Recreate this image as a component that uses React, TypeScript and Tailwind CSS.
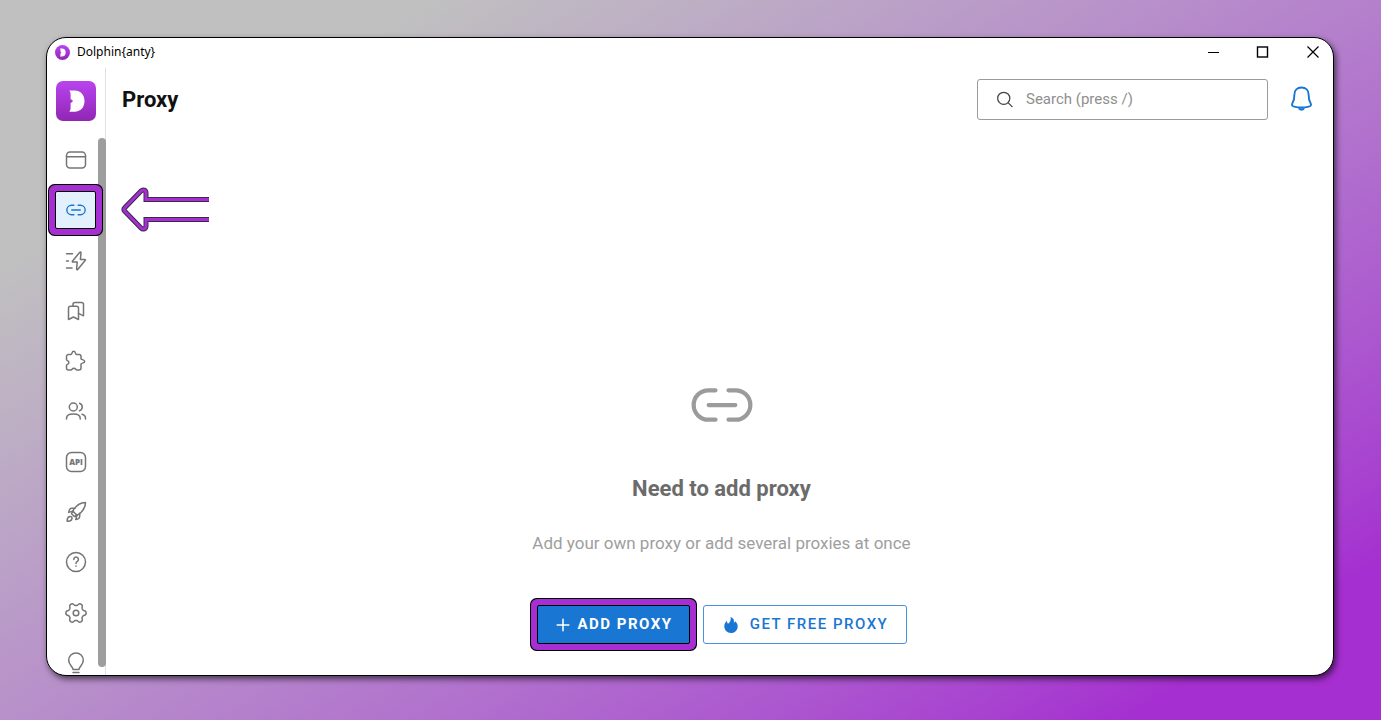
import type { ReactNode } from 'react';

type IconProps = { className?: string; children?: ReactNode };

function Icon({ className = 'size-6', children }: IconProps) {
  return (
    <svg
      className={className}
      viewBox="0 0 24 24"
      fill="none"
      stroke="currentColor"
      strokeWidth="1.5"
      strokeLinecap="round"
      strokeLinejoin="round"
      aria-hidden="true"
    >
      {children}
    </svg>
  );
}

function LinkIcon({ className }: IconProps) {
  return (
    <Icon className={className}>
      <path d="M9.7 6.800H7.200a5.200 5.200 0 0 0 0 10.400h2.500M14.300 6.800h2.500a5.200 5.200 0 0 1 0 10.400h-2.500M7.300 12h9.400" />
    </Icon>
  );
}

function LogoMark({ className, round }: { className: string; round?: boolean }) {
  return (
    <svg className={className} viewBox="0 0 40 40" aria-hidden="true">
      <defs>
        <linearGradient id={round ? 'logo-round' : 'logo-square'} x1="0" y1="0" x2="0" y2="1">
          <stop offset="0" stopColor="#b944f0" />
          <stop offset="1" stopColor="#9126b4" />
        </linearGradient>
      </defs>
      <rect width="40" height="40" rx={round ? 20 : 7} fill={round ? 'url(#logo-round)' : 'url(#logo-square)'} />
      <path
        d="M13.3 9.5h5.4c6 0 9.8 4.2 9.8 10.6s-3.8 10.6-9.8 10.6h-5.4c.9-1.3 1.3-2.4 1.3-3.9v-4.9c1.2-.3 2-.9 2.3-1.8-.3-.9-1.1-1.5-2.3-1.8v-4.9c0-1.5-.4-2.6-1.3-3.9Z"
        fill="#fff"
      />
    </svg>
  );
}

// six soft teeth around the hub
const gearPoints = Array.from({ length: 120 }, (_, i) => {
  const angle = (i * Math.PI) / 60;
  const wave = Math.cos(6 * angle);
  const radius = 8.8 + 1.4 * Math.tanh(1.6 * wave);
  return `${(12 + radius * Math.cos(angle)).toFixed(2)},${(12 + radius * Math.sin(angle)).toFixed(2)}`;
}).join(' ');

const items = [
  {
    label: 'Browsers',
    icon: (
      <Icon>
        <rect x="2.5" y="4" width="19" height="16" rx="3.5" />
        <path d="M2.5 8.7h19" />
      </Icon>
    ),
  },
  { label: 'Proxy', active: true, icon: <LinkIcon className="size-[22px]" /> },
  {
    label: 'Automation',
    icon: (
      <Icon>
        <path d="M2.5 4.7h6M2.5 12h2M2.5 19H8" />
        <path d="M15.8 3.2 8.4 12.2c-.3.4 0 .9.5.9h4.3l-.6 7c0 .7.7.9 1.1.4l7.6-9.2c.3-.4.1-.9-.4-.9h-4.5l.6-6.8c0-.7-.8-.9-1.2-.4Z" />
      </Icon>
    ),
  },
  {
    label: 'Bookmarks',
    icon: (
      <Icon>
        <path d="M4.5 9.2a2 2 0 0 1 2-2h6a2 2 0 0 1 2 2v11.3L9.5 18l-5 2.5Z" />
        <path d="M9 7.2V5.5a2 2 0 0 1 2-2h6.5a2 2 0 0 1 2 2v11.3l-5-2.5" />
      </Icon>
    ),
  },
  {
    label: 'Extensions',
    icon: (
      <Icon>
        <path d="M2.500 7.500a2 2 0 0 1 2-2H7c1.200 0 .6-3.200 2.700-3.200s1.500 3.200 2.700 3.200H15a2 2 0 0 1 2 2v2.200c0 1.200 3.700.7 3.700 2.700S17 13.900 17 15.100v3.900a2 2 0 0 1-2 2h-2.200c-1.200 0-.9-1.800-2.900-1.800S8.200 21 7 21H4.500a2 2 0 0 1-2-2v-2.600c0-1.200 2.400-.9 2.400-2.900s-2.400-1.700-2.400-2.900Z" />
      </Icon>
    ),
  },
  {
    label: 'Users',
    icon: (
      <Icon>
        <circle cx="9.3" cy="8" r="4" />
        <path d="M15.5 4.2a4 4 0 0 1 0 7.6M2.5 20v-.8c0-2.7 2.3-4.2 6.8-4.2s6.9 1.500 6.900 4.200v.8M18 15.300c2.300.6 3.500 1.900 3.500 3.900v.8" />
      </Icon>
    ),
  },
  {
    label: 'API',
    icon: (
      <Icon>
        <rect x="2.5" y="2.5" width="19" height="19" rx="5" />
        <text
          x="12"
          y="14.500"
          textAnchor="middle"
          fill="currentColor"
          stroke="none"
          className="font-['Open_Sans',sans-serif] text-[8px] font-extrabold"
        >
          API
        </text>
      </Icon>
    ),
  },
  {
    label: 'Quick start',
    icon: (
      <Icon>
        <path d="M21.5 2.5c-5 0-9.6 3-12.7 8.6l4.2 4.2c5.5-3.2 8.5-7.8 8.5-12.8Z" />
        <path d="M10.8 8.3H7.7c-1.3 0-2.6 1.8-3 4.1l4.1-1.3M15.7 13.2v3.1c0 1.3-1.7 2.9-4 3.3l1.3-4.3M8.8 11.1l-1.3 2.7 2.7 2.7 2.8-1.2M5.8 16.5c-1.8.4-2.8 2.3-2.6 4.8 2.5.2 4.4-.8 4.8-2.6.3-1.4-.8-2.5-2.2-2.2Z" />
      </Icon>
    ),
  },
  {
    label: 'Help',
    icon: (
      <Icon>
        <circle cx="12" cy="12" r="9.5" />
        <path d="M9.8 9.4a2.3 2.3 0 1 1 3.5 2c-.9.6-1.3 1-1.3 2M12 16.1v.2" />
      </Icon>
    ),
  },
  {
    label: 'Settings',
    icon: (
      <Icon>
        <circle cx="12" cy="12" r="2.8" />
        <polygon points={gearPoints} />
      </Icon>
    ),
  },
  {
    label: 'Ideas',
    icon: (
      <Icon>
        <path d="M9 18.5c0-3-4.3-4.6-4.3-9.3a7.3 7.3 0 0 1 14.6 0c0 4.7-4.3 6.3-4.3 9.3ZM9 21.5h6" />
      </Icon>
    ),
  },
];

function Sidebar() {
  return (
    <aside className="relative flex w-[59px] shrink-0 flex-col items-center border-r border-[#e0e0e0] pt-[13px] pr-px">
      <LogoMark className="size-10 shrink-0" />
      {/* the list runs a little past the window's bottom edge */}
      <nav className="mt-5 -mb-[7px] flex flex-1 flex-col justify-between">
        {items.map(({ label, icon, active }) => (
          <button
            key={label}
            type="button"
            aria-label={label}
            className={
              active
                ? 'relative z-10 flex h-[38px] w-[41px] shrink-0 items-center justify-center rounded-xs border border-black bg-[#e3f1fd] text-[#1976d2] shadow-[0_0_0_6px_#a52fd0,0_0_0_7px_#000]'
                : 'flex h-[38px] w-[41px] shrink-0 items-center justify-center text-[#757575]'
            }
          >
            {icon}
          </button>
        ))}
      </nav>
      <div className="absolute top-[70px] -right-px bottom-2 w-2 rounded-full bg-[#9e9e9e]" />
    </aside>
  );
}

function TitleBar() {
  return (
    <div className="flex h-[30px] shrink-0 items-center pr-3 pb-0.5 pl-2 text-black">
      <LogoMark className="mr-[7px] size-[15px]" round />
      <span className="flex-1 font-['Noto_Sans',sans-serif] text-xs">Dolphin&#123;anty&#125;</span>
      <div className="flex gap-[34px]">
        <button type="button" aria-label="Minimize">
          <svg className="size-4" viewBox="0 0 16 16" stroke="currentColor" fill="none">
            <path d="M3 8.5h11" strokeWidth="1.2" />
          </svg>
        </button>
        <button type="button" aria-label="Maximize">
          <svg className="size-4" viewBox="0 0 16 16" stroke="currentColor" fill="none">
            <rect x="2.5" y="3" width="10" height="10" strokeWidth="1.4" />
          </svg>
        </button>
        <button type="button" aria-label="Close">
          <svg className="size-4" viewBox="0 0 16 16" stroke="currentColor" fill="none">
            <path d="m2.5 2.500 11 11M13.500 2.500l-11 11" strokeWidth="1.2" />
          </svg>
        </button>
      </div>
    </div>
  );
}

function Header() {
  return (
    <header className="flex items-center pt-[11px] pr-[18px] pl-4">
      <h1 className="flex-1 text-[22px] leading-7 font-bold text-[#111]">Proxy</h1>
      <label className="flex h-[41px] w-[291px] items-center rounded-[3px] border border-[#9b9b9b] pl-[17px]">
        <Icon className="size-5 text-[#424242]">
          <circle cx="10.5" cy="10" r="7.3" />
          <path d="m16 15.500 4.500 4.500" />
        </Icon>
        <input
          type="search"
          aria-label="Search"
          placeholder="Search (press /)"
          className="ml-[11px] min-w-0 flex-1 bg-transparent text-[15px] outline-none placeholder:text-[#8f8f8f]"
        />
      </label>
      <button type="button" aria-label="Notifications" className="ml-5 pb-0.5 text-[#1976d2]">
        <Icon className="size-[27px]">
          <path
            strokeWidth="1.7"
            d="M12 2.2c-3.8 0-6.3 2.7-6.3 6.3 0 3.7-.3 5.3-1.7 7.5-1 1.7-.4 2.7 1.5 3.2 4 1 9 1 13 0 1.9-.5 2.5-1.5 1.5-3.2-1.4-2.2-1.7-3.8-1.7-7.5 0-3.6-2.5-6.3-6.3-6.3ZM9.5 20.2c.4 1.300 1.300 1.800 2.500 1.800s2.100-.5 2.500-1.800"
          />
        </Icon>
      </button>
    </header>
  );
}

const arrowPath = 'M88 13.5H25V7c0-3-3-4-5-2L4 21.5c-1.5 1.5-1.5 2.5 0 4L20 42c2 2 5 1 5-2v-6.5h63';

function PointerArrow() {
  return (
    <svg className="absolute top-[118px] left-[15px] h-[46px] w-[92px]" viewBox="0 0 92 46" fill="none" aria-hidden="true">
      <path d={arrowPath} stroke="#3a2a48" strokeWidth="5" />
      <path d={arrowPath} stroke="#a52fd0" strokeWidth="3" />
    </svg>
  );
}

function EmptyState() {
  return (
    <section className="flex flex-1 flex-col items-center justify-end pb-[31px] pl-1">
      <LinkIcon className="size-[68px] text-[#9b9b9b]" />
      <h2 className="mt-9 text-[22px] leading-7 font-bold text-[#6b6b6b]">Need to add proxy</h2>
      <p className="mt-[26px] text-[17px] leading-7 text-[#9e9e9e]">Add your own proxy or add several proxies at once</p>
      <div className="mt-12 flex gap-[13px]">
        <button
          type="button"
          className="flex h-[39px] w-[153px] items-center justify-center rounded-xs border border-black bg-[#1976d2] pl-[3px] text-[15px] font-bold tracking-widest text-white shadow-[0_0_0_6px_#a52fd0,0_0_0_7px_#000]"
        >
          <Icon className="mr-[7px] size-3.5">
            <path d="M12 2v20M2 12h20" strokeWidth="2.6" />
          </Icon>
          ADD PROXY
        </button>
        <button
          type="button"
          className="flex h-[39px] w-[204px] items-center justify-center rounded-[3px] border border-[#4a92dc] pl-[3px] text-[15px] font-medium tracking-widest text-[#1976d2]"
        >
          <svg className="mr-3 h-4 w-3.5" viewBox="0 0 14 16" fill="currentColor" aria-hidden="true">
            <path d="M6.5 0c3 1.2 4 3.2 3.4 5.8.7-.3 1-.9 1.1-1.9 1.7 1.4 2.7 3.3 2.7 5.3 0 3.8-2.7 6.8-6.7 6.800S.3 13 .3 9.300C.3 7 1.300 5.200 3 3.700c0 1.500.3 2.500 1.200 3C5.500 6 7.300 3.500 6.500 0Z" />
          </svg>
          GET FREE PROXY
        </button>
      </div>
    </section>
  );
}

export default function App() {
  return (
    <div className="flex h-screen bg-linear-148 from-[#c0c0c0] from-17% to-[#a52fd0] to-90% pt-[37px] pr-[47px] pb-11 pl-[46px] font-[Roboto,sans-serif]">
      <div className="flex min-w-0 flex-1 flex-col overflow-hidden rounded-[20px] border border-black bg-white shadow-[2px_3px_6px_rgba(0,0,0,0.6)]">
        <TitleBar />
        <div className="flex min-h-0 flex-1">
          <Sidebar />
          <main className="relative flex min-w-0 flex-1 flex-col">
            <Header />
            <PointerArrow />
            <EmptyState />
          </main>
        </div>
      </div>
    </div>
  );
}
